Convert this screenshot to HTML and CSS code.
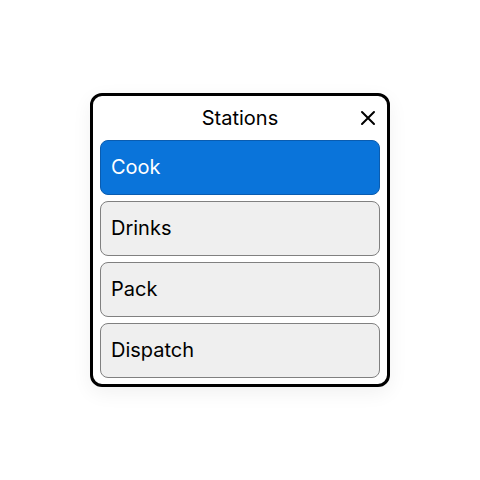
FILE: index.html
```html
<!DOCTYPE html>
<html>
<head>
<meta charset="utf-8">
<link rel="stylesheet" href="styles.css">
</head>
<body>
<div class="panel">
  <div class="header">
    <span class="title">Stations</span>
    <button class="close" aria-label="Close">
      <svg width="16" height="16" viewBox="0 0 16 16"><path d="M2 2 L14 14 M14 2 L2 14" stroke="#000" stroke-width="2" stroke-linecap="round"/></svg>
    </button>
  </div>
  <div class="list">
    <div class="item active">Cook</div>
    <div class="item">Drinks</div>
    <div class="item">Pack</div>
    <div class="item">Dispatch</div>
  </div>
</div>
</body>
</html>
```
FILE: styles.css
```css
html, body {
  margin: 0;
  padding: 0;
  background: #fff;
}
body {
  height: 480px;
  display: flex;
  align-items: center;
  justify-content: center;
  font-family: Inter, "Noto Sans", sans-serif;
}
.panel {
  width: 300px;
  box-sizing: border-box;
  border: 3px solid #000;
  border-radius: 12px;
  padding: 0 7px 6px;
  background: #fff;
  box-shadow: 0 6px 20px rgba(0,0,0,0.06);
  margin-top: -1px;
}
.header {
  height: 44px;
  display: flex;
  align-items: center;
  justify-content: center;
  position: relative;
}
.title {
  font-size: 20px;
  color: #000;
}
.close {
  position: absolute;
  right: 4px;
  top: 14px;
  border: 0;
  background: none;
  padding: 0;
  width: 16px;
  height: 16px;
  display: flex;
}
.list {
  display: flex;
  flex-direction: column;
  gap: 6px;
}
.item {
  height: 55px;
  box-sizing: border-box;
  border: 1px solid #808080;
  border-radius: 8px;
  background: #efefef;
  display: flex;
  align-items: center;
  padding-left: 10px;
  font-size: 20px;
  color: #000;
}
.item.active {
  background: #0a74da;
  border-color: #0a5cb0;
  color: #fff;
}
```
